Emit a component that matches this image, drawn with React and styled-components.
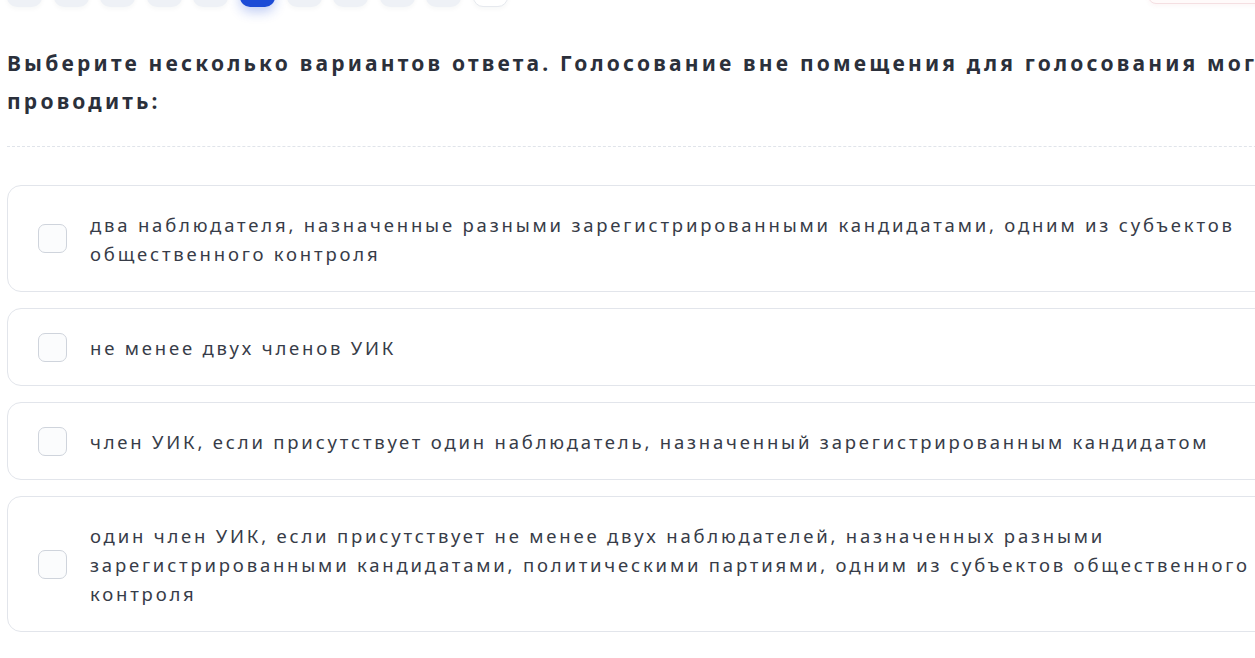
import styled, { createGlobalStyle } from 'styled-components';

const GlobalStyle = createGlobalStyle`
  html, body {
    margin: 0;
    padding: 0;
    background: #fff;
    overflow: hidden;
  }
  body {
    font-family: 'Noto Sans', 'Open Sans', sans-serif;
  }
`;

const Page = styled.div`
  width: 1320px;
  padding-left: 7px;
`;

const Pager = styled.div`
  display: flex;
  justify-content: space-between;
  align-items: flex-start;
  margin-top: -29px;
`;

const Steps = styled.div`
  display: flex;
  gap: 11.6px;
`;

const Step = styled.div`
  width: 35px;
  height: 36px;
  border-radius: 10px;
  box-sizing: border-box;
  background: ${p => (p.$active ? '#1c4bd6' : p.$plain ? '#fff' : '#eef1f6')};
  border: ${p => (p.$plain ? '1px solid #e6e9ee' : 'none')};
  box-shadow: ${p =>
    p.$active ? '0 5px 12px rgba(28, 75, 214, 0.28)' : '0 2px 5px rgba(30, 40, 60, 0.04)'};
`;

const FinishButton = styled.div`
  width: 160px;
  height: 31px;
  margin-right: 17px;
  border-radius: 8px;
  border: 1px solid #f5dfe2;
  background: #fffafa;
  box-shadow: 0 2px 4px rgba(200, 80, 90, 0.05);
`;

const Question = styled.h2`
  margin: 37px 0 0;
  font-size: 21px;
  font-weight: 700;
  line-height: 38px;
  letter-spacing: 3.2px;
  color: #2b303b;
`;

const Divider = styled.hr`
  margin: 26px 0 38px;
  border: none;
  border-top: 1px dashed #e0e4ea;
`;

const Options = styled.div`
  display: flex;
  flex-direction: column;
  gap: 16px;
`;

const Option = styled.label`
  display: flex;
  align-items: center;
  gap: 23px;
  padding: 23.5px 30px;
  border: 1px solid #e2e5eb;
  border-radius: 14px;
  background: #fff;
  cursor: pointer;
`;

const Box = styled.span`
  flex: none;
  width: 29px;
  height: 29px;
  box-sizing: border-box;
  border: 1.5px solid #cfd4dc;
  border-radius: 7px;
  background: #fbfcfd;
`;

const OptionText = styled.span`
  font-size: 18.5px;
  line-height: 29px;
  letter-spacing: 2.8px;
  color: #373c48;
`;

const answers = [
  'два наблюдателя, назначенные разными зарегистрированными кандидатами, одним из субъектов общественного контроля',
  'не менее двух членов УИК',
  'член УИК, если присутствует один наблюдатель, назначенный зарегистрированным кандидатом',
  'один член УИК, если присутствует не менее двух наблюдателей, назначенных разными зарегистрированными кандидатами, политическими партиями, одним из субъектов общественного контроля',
];

export default function App() {
  return (
    <Page>
      <GlobalStyle />
      <Pager>
        <Steps>
          {Array.from({ length: 11 }, (_, i) => (
            <Step key={i} $active={i === 5} $plain={i === 10} />
          ))}
        </Steps>
        <FinishButton />
      </Pager>
      <Question>
        Выберите несколько вариантов ответа. Голосование вне помещения для голосования могут
        проводить:
      </Question>
      <Divider />
      <Options>
        {answers.map(text => (
          <Option key={text}>
            <Box />
            <OptionText>{text}</OptionText>
          </Option>
        ))}
      </Options>
    </Page>
  );
}
